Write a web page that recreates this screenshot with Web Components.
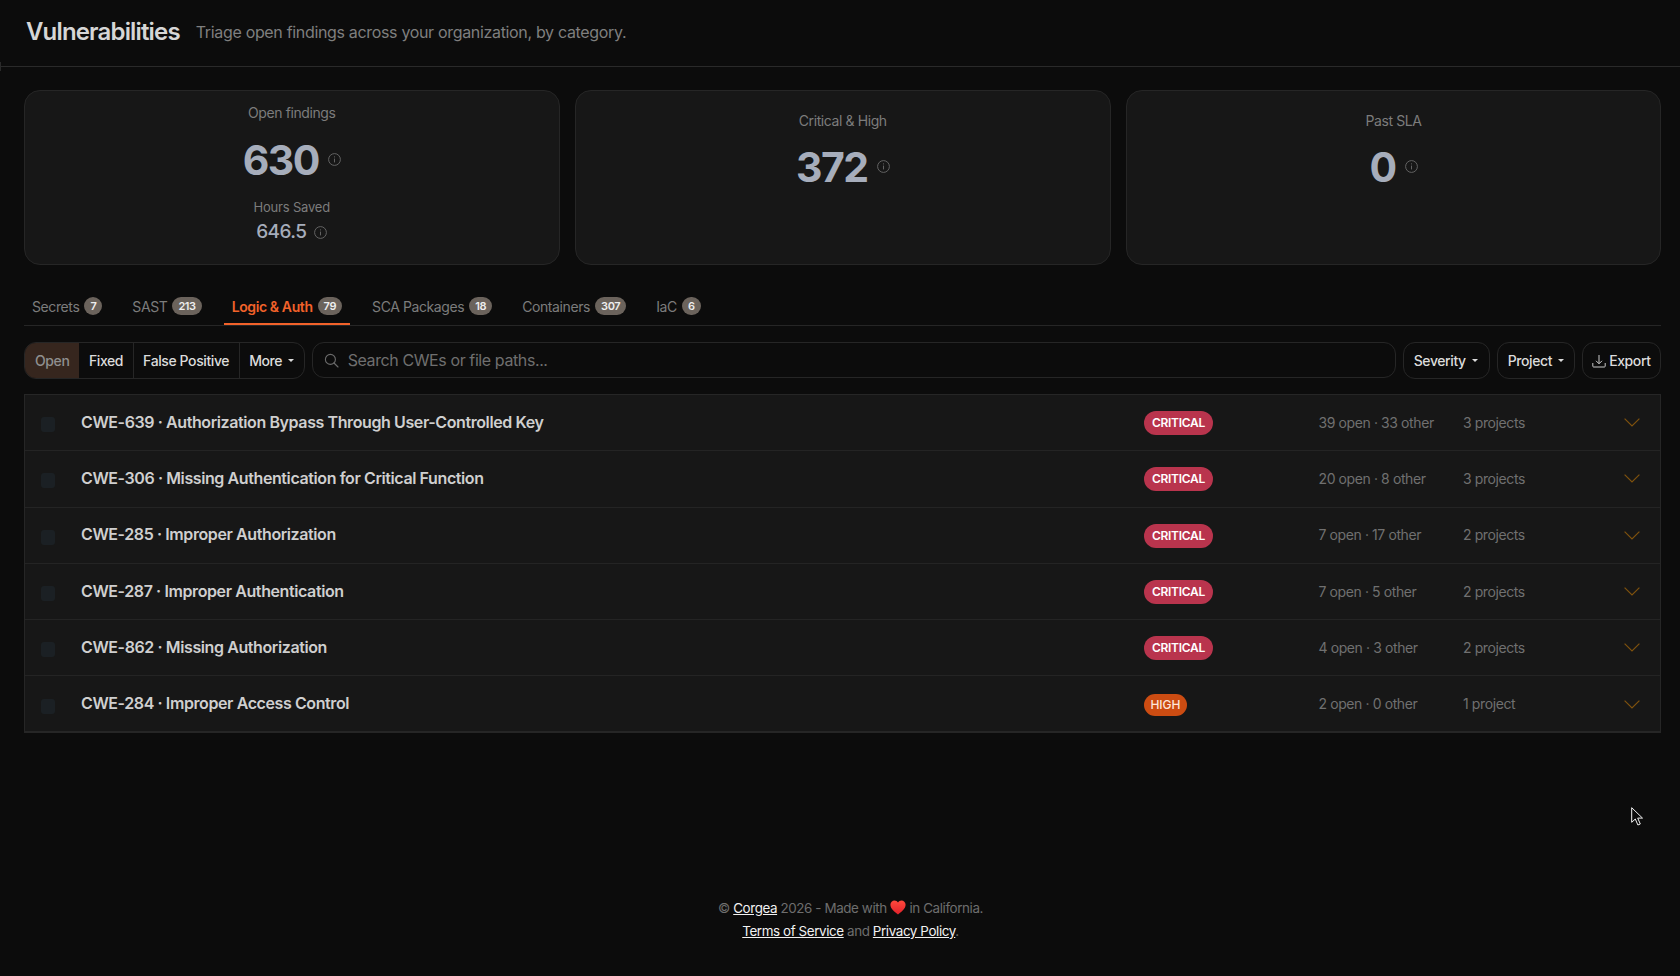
<!DOCTYPE html>
<html lang="en">
<head>
<meta charset="utf-8">
<title>Vulnerabilities</title>
<style>
html,body{margin:0;padding:0;background:#0c0c0c;color:#ccc;font-family:Inter,"Noto Sans",sans-serif;letter-spacing:-.025em;}
body{height:976px;overflow:hidden;position:relative;display:flex;flex-direction:column;}
page-footer a{color:#f2f2f2;text-decoration:underline;}
</style>
</head>
<body>
<page-header><span slot="title">Vulnerabilities</span><span slot="sub">Triage open findings across your organization, by category.</span></page-header>
<main-area>
  <stat-row>
    <stat-card tight label="Open findings" value="630"><sub-stat slot="extra" label="Hours Saved" value="646.5"></sub-stat></stat-card>
    <stat-card label="Critical &amp; High" value="372"></stat-card>
    <stat-card label="Past SLA" value="0"></stat-card>
  </stat-row>
  <tab-bar>
    <tab-item count="7">Secrets</tab-item>
    <tab-item count="213">SAST</tab-item>
    <tab-item active count="79">Logic &amp; Auth</tab-item>
    <tab-item count="18">SCA Packages</tab-item>
    <tab-item count="307">Containers</tab-item>
    <tab-item count="6">IaC</tab-item>
  </tab-bar>
  <tool-bar>
    <seg-group>
      <seg-btn active>Open</seg-btn>
      <seg-btn first>Fixed</seg-btn>
      <seg-btn>False Positive</seg-btn>
      <seg-btn caret>More</seg-btn>
    </seg-group>
    <search-box>Search CWEs or file paths...</search-box>
    <tool-btn caret style="padding-right:11.5px">Severity</tool-btn>
    <tool-btn caret>Project</tool-btn>
    <tool-btn icon>Export</tool-btn>
  </tool-bar>
  <cwe-table>
    <cwe-row stats="39 open · 33 other" projects="3 projects">CWE-639 · Authorization Bypass Through User-Controlled Key</cwe-row>
    <cwe-row stats="20 open · 8 other" projects="3 projects">CWE-306 · Missing Authentication for Critical Function</cwe-row>
    <cwe-row stats="7 open · 17 other" projects="2 projects">CWE-285 · Improper Authorization</cwe-row>
    <cwe-row stats="7 open · 5 other" projects="2 projects">CWE-287 · Improper Authentication</cwe-row>
    <cwe-row stats="4 open · 3 other" projects="2 projects">CWE-862 · Missing Authorization</cwe-row>
    <cwe-row sev="HIGH" stats="2 open · 0 other" projects="1 project">CWE-284 · Improper Access Control</cwe-row>
  </cwe-table>
</main-area>
<page-footer>
  <div>© <a>Corgea</a> 2026 - Made with <heart-icon></heart-icon> in California.</div>
  <div><a>Terms of Service</a> and <a>Privacy Policy</a>.</div>
</page-footer>
<mouse-cursor></mouse-cursor>
<script>
const ICON={
 info:`<svg width="13" height="13" viewBox="0 0 13 13" fill="none" stroke="#6b6b6b" stroke-width=".9"><circle cx="6.5" cy="6.5" r="5.9"/><path d="M6.5 5.6v3.8"/><path d="M6.5 3.4v1"/></svg>`,
 caret:`<svg width="6" height="3" viewBox="0 0 6 3"><path d="M0 0h6L3 3z" fill="currentColor"/></svg>`,
 search:`<svg width="15" height="15" viewBox="0 0 15 15" fill="none" stroke="#6b6b6b" stroke-width="1.1"><circle cx="6.4" cy="6.4" r="5"/><path d="M10 10l4 4" stroke-linecap="round"/></svg>`,
 download:`<svg width="14" height="14" viewBox="0 0 14 14" fill="none" stroke="#c8c8c8" stroke-width="1"><path d="M7 1v8.500M4 6.800 7 9.800l3-3"/><path d="M.8 9v3.200a.8.8 0 0 0 .8.8h10.800a.8.8 0 0 0 .8-.8V9"/></svg>`,
 chevron:`<svg width="16" height="9" viewBox="0 0 16 9" fill="none" stroke="#7f520e" stroke-width="1.2"><path d="M.6.6 8 8l7.400-7.400"/></svg>`,
 heart:`<svg width="16" height="15" viewBox="0 0 16 15"><defs><linearGradient id="h" x1="0" y1="0" x2="0" y2="1"><stop offset="0" stop-color="#ff4a3d"/><stop offset="1" stop-color="#e0202a"/></linearGradient></defs><path d="M8 14.600C5 12.200.4 9 .4 4.800.4 2.200 2.400.4 4.500.4 6 .4 7.300 1.200 8 2.600 8.700 1.200 10 .4 11.500.4c2.100 0 4.100 1.800 4.100 4.400C15.600 9 11 12.200 8 14.600z" fill="url(#h)"/></svg>`,
 cursor:`<svg width="12" height="19" viewBox="0 0 12 19"><path d="M.7.7v14.600l3.600-3.300 2.600 6 2.400-1-2.600-5.900h4.800z" fill="#0a0a0a" stroke="#f2f2f2" stroke-width="1"/></svg>`
};
function el(name,html){
 customElements.define(name,class extends HTMLElement{
  constructor(){super();this.attachShadow({mode:"open"});}
  connectedCallback(){this.shadowRoot.innerHTML=typeof html==="function"?html(this):html;}
 });
}
el("page-header",`<style>
:host{display:flex;flex:none;align-items:center;height:66px;border-bottom:1px solid #2a2a2a;padding:0 26px;gap:16px;position:relative}
h1{margin:0;font-size:24px;font-weight:600;color:#d6d6d6;line-height:28px;position:relative;top:-1px;letter-spacing:-.84px}
p{margin:0;font-size:16px;color:#7f7f7f;line-height:24px;position:relative;top:-1px;letter-spacing:-.33px}
i{position:absolute;left:0;top:62px;width:1px;height:9px;background:#2a2a2a}
</style><h1><slot name="title"></slot></h1><p><slot name="sub"></slot></p><i></i>`);
el("main-area",`<style>:host{display:block;flex:none;padding:0 19px 0 24px}</style><slot></slot>`);
el("stat-row",`<style>:host{display:grid;grid-template-columns:535.5px 535.5px 1fr;gap:15.5px;margin-top:23px}</style><slot></slot>`);
el("stat-card",(h)=>{const t=h.hasAttribute("tight");return `<style>
:host{display:block;background:#171717;border:1px solid #262626;border-radius:16px;box-sizing:border-box;height:175px;text-align:center;padding-top:${t?12:20}px;min-width:0}
.l{font-size:14px;line-height:20px;color:#7c7c7c}
.v{display:flex;justify-content:center;align-items:center;gap:9px;margin-top:${t?13:12}px;font-size:41px;font-weight:700;line-height:48px;letter-spacing:-1.5px;color:#a6adbb}
.v svg{position:relative;top:-1px}
</style><div class="l">${h.getAttribute("label")}</div><div class="v"><span>${h.getAttribute("value")}</span>${ICON.info}</div><slot name="extra"></slot>`;});
el("sub-stat",(h)=>`<style>
:host{display:block;text-align:center;margin-top:13px}
.l{font-size:13px;line-height:20px;color:#7c7c7c;letter-spacing:-.2px}
.v{display:flex;justify-content:center;align-items:center;gap:8px;font-size:19px;font-weight:500;line-height:28px;letter-spacing:-.6px;color:#a6adbb;margin-top:1px}
</style><div class="l">${h.getAttribute("label")}</div><div class="v"><span>${h.getAttribute("value")}</span>${ICON.info}</div>`);
el("tab-bar",`<style>:host{display:flex;gap:14px;margin-top:24px;height:36px;border-bottom:1px solid #262626}</style><slot></slot>`);
el("tab-item",(h)=>{const a=h.hasAttribute("active");return `<style>
:host{display:flex;align-items:center;gap:5px;padding:0 8px 2px;font-size:14px;color:${a?"#f2622a":"#7c7c7c"};font-weight:${a?600:400};height:36px;box-sizing:border-box;${a?"border-bottom:2px solid #f2622a;padding-bottom:0;":""}}
b{display:inline-block;background:#6b635c;color:#eee;border-radius:9px;font-size:11px;font-weight:600;line-height:18px;height:18px;padding:0 6px;text-align:center}
</style><span><slot></slot></span><b>${h.getAttribute("count")}</b>`;});
el("tool-bar",`<style>:host{display:flex;gap:7px;margin-top:16px;align-items:flex-start;height:37px}</style><slot></slot>`);
el("seg-group",`<style>:host{display:flex;flex:none;border:1px solid #262626;border-radius:12px;overflow:hidden;height:37px;box-sizing:border-box}</style><slot></slot>`);
el("seg-btn",(h)=>{const a=h.hasAttribute("active");return `<style>
:host{display:flex;align-items:center;gap:6px;padding:0 ${a?10:9.5}px;font-size:14px;color:${a?"#8f8f8f":"#dcdcdc"};background:${a?"#36261e":"transparent"};font-weight:500;border-left:${a||h.hasAttribute("first")?"0":"1px solid #262626"}}
</style><slot></slot>${h.hasAttribute("caret")?ICON.caret:""}`;});
el("search-box",`<style>
:host{display:flex;flex:1;align-items:center;gap:9px;height:36px;box-sizing:border-box;border:1px solid #262626;border-radius:12px;padding:0 0 0 11px;min-width:0;color:#6f6f6f;font-size:16px}
</style>${ICON.search}<span><slot></slot></span>`);
el("tool-btn",(h)=>`<style>
:host{display:flex;flex:none;align-items:center;gap:${h.hasAttribute("icon")?3:6}px;height:37px;box-sizing:border-box;border:1px solid #262626;border-radius:12px;padding:0 9.5px;font-size:14px;font-weight:500;color:#dcdcdc}
</style>${h.hasAttribute("icon")?ICON.download:""}<slot></slot>${h.hasAttribute("caret")?ICON.caret:""}`);
el("cwe-table",`<style>:host{display:block;margin-top:15px;background:#171717;border:1px solid #262626;border-bottom-width:2px;box-sizing:border-box;height:339px}</style><slot></slot>`);
el("cwe-row",(h)=>{const sev=h.getAttribute("sev")||"CRITICAL";const hi=sev==="HIGH";return `<style>
:host{display:grid;grid-template-columns:56px 1063px 174.5px 144.5px 160.5px 16px;align-items:center;height:56.3px;box-sizing:border-box;border-bottom:1px solid #242424}
:host(:last-child){border-bottom:0;height:56px}
.c{width:14px;height:15px;border-radius:3px;background:#1b2024;margin-left:16px;position:relative;top:2px}
.t{font-size:16px;font-weight:600;color:#cfcfcf;position:relative;top:-1px;white-space:nowrap}
.s{display:inline-block;border-radius:12px;font-size:12px;line-height:${hi?22:24}px;height:${hi?22:24}px;padding:0 ${hi?6.5:8}px;background:${hi?"#cc4c12":"#b9344d"};font-weight:${hi?500:600};color:${hi?"#fde6da":"#fff"};letter-spacing:${hi?"-.1px":"-.3px"}}
.w{display:flex;position:relative;top:.5px}
.m{font-size:14px;color:#707070;white-space:nowrap;position:relative;top:-.5px}
svg{display:block}
</style><span class="c"></span><span class="t"><slot></slot></span><span class="w"><span class="s">${sev}</span></span><span class="m">${h.getAttribute("stats")}</span><span class="m">${h.getAttribute("projects")}</span>${ICON.chevron}`;});
el("page-footer",`<style>
:host{display:block;flex:none;margin-top:164px;padding-left:21px;text-align:center;font-size:13.4px;line-height:23px;color:#6e6e6e}
::slotted(div){display:block}
</style><slot></slot>`);
el("heart-icon",`<style>:host{display:inline-block;vertical-align:-2px;line-height:0}</style>${ICON.heart}`);
el("mouse-cursor",`<style>:host{position:absolute;left:1631px;top:807px;line-height:0}</style>${ICON.cursor}`);
</script>
</body>
</html>
